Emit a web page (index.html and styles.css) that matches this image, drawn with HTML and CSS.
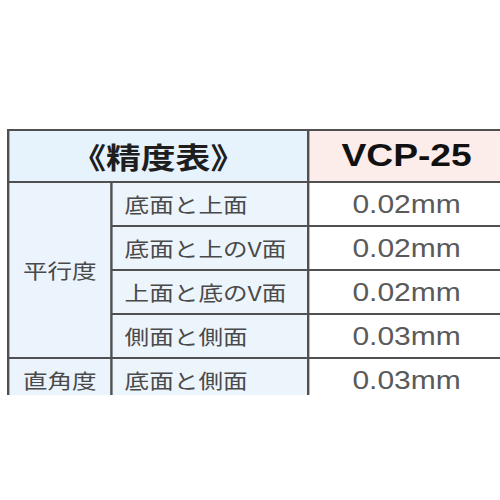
FILE: index.html
```html
<!DOCTYPE html>
<html lang="ja">
<head>
<meta charset="utf-8">
<title>精度表</title>
<link rel="stylesheet" href="styles.css">
</head>
<body>
<div class="frame">
  <div class="spec">
    <div class="cell head-title">《精度表》</div>
    <div class="cell head-model">VCP-25</div>

    <div class="cell group parallel">平行度</div>
    <div class="cell item">底面と上面</div>
    <div class="cell value">0.02mm</div>
    <div class="cell item">底面と上のV面</div>
    <div class="cell value">0.02mm</div>
    <div class="cell item">上面と底のV面</div>
    <div class="cell value">0.02mm</div>
    <div class="cell item">側面と側面</div>
    <div class="cell value">0.03mm</div>

    <div class="cell group">直角度</div>
    <div class="cell item">底面と側面</div>
    <div class="cell value">0.03mm</div>
  </div>
</div>
</body>
</html>
```

FILE: styles.css
```css
html, body {
  margin: 0;
  padding: 0;
  background: #ffffff;
}

.frame {
  box-sizing: border-box;
  width: 500px;
  height: 395px;
  padding: 129px 0 0 7px;
  overflow: hidden;
}

.spec {
  display: grid;
  grid-template-columns: 84px 162px 162px;
  grid-template-rows: 50px repeat(5, 42px);
  gap: 2px;
  padding: 2px 0 0 2px;
  width: max-content;
  background: #505050;
  transform: scaleX(1.2);
  transform-origin: 0 0;
  font-family: "Noto Sans CJK JP", "Noto Sans", sans-serif;
}

.cell {
  display: flex;
  align-items: center;
  justify-content: center;
  background: #ffffff;
}

.head-title {
  grid-column: 1 / span 2;
  background: #e6f2fc;
  font-size: 29px;
  font-weight: 700;
  color: #1e1e1e;
}

.head-model {
  background: #fcedeb;
  font-family: "Liberation Sans", Arial, sans-serif;
  font-size: 31px;
  font-weight: 700;
  color: #111111;
}

.group {
  background: #ebf4fc;
  font-size: 20.5px;
  color: #4a4a4a;
}

.parallel {
  grid-row: span 4;
}

.item {
  justify-content: flex-start;
  padding-left: 10px;
  background: #edf5fc;
  font-size: 20.5px;
  color: #4a4a4a;
}

.value {
  font-family: "Liberation Sans", Arial, sans-serif;
  font-size: 25px;
  color: #5a5a5a;
}
```
